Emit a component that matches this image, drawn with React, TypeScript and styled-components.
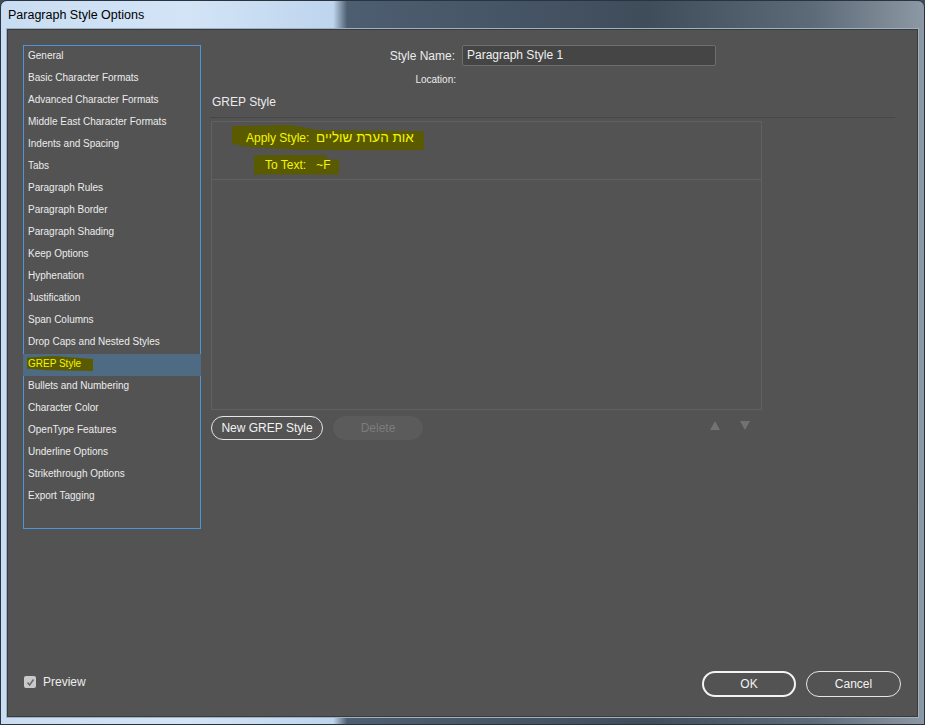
import React from "react";
import styled, { createGlobalStyle } from "styled-components";

const Global = createGlobalStyle`
  html, body { margin: 0; padding: 0; background: #3f4c59; }
  body { font-family: "Liberation Sans", Arial, sans-serif; }
  * { box-sizing: border-box; }
`;

const Window = styled.div`
  width: 925px;
  height: 725px;
  display: flex;
  flex-direction: column;
  padding: 0 6px 7px 6px;
  border-radius: 7px 7px 0 0;
  border: 1px solid #2a3440;
  background: linear-gradient(
    90deg,
    #c9ddf2 0%,
    #d3e4f6 20%,
    #bed5ee 36%,
    #4d5e70 37.5%,
    #465566 55%,
    #3f4c5a 70%,
    #5d6a77 88%,
    #8c99a5 100%
  );
`;

const TitleBar = styled.div`
  height: 28px;
  display: flex;
  align-items: center;
  padding-left: 1px;
  font-family: "Liberation Sans", Arial, sans-serif;
  font-size: 12.5px;
  color: #000;
`;

const Content = styled.div`
  flex: 1;
  background: #535353;
  border: 1px solid #3a3a3a;
  outline: 1px solid #9fb2c4;
  display: flex;
  flex-direction: column;
  padding: 15px 16px 19px 15px;
  color: #e8e8e8;
  font-family: "Liberation Sans", Arial, sans-serif;
`;

const Top = styled.div`
  display: flex;
  gap: 10px;
`;

const SideList = styled.ul`
  list-style: none;
  margin: 0;
  padding: 0;
  width: 178px;
  height: 484px;
  border: 1px solid #4a95de;
  flex-shrink: 0;
`;

const SideItem = styled.li<{ $active?: boolean }>`
  height: 22px;
  line-height: 19px;
  font-size: 10px;
  color: #ececec;
  background: ${(p) => (p.$active ? "#4f6a83" : "transparent")};
  margin: 0 -1px;
  padding-left: 5px;
`;

const Marker = styled.span`
  background: #5a5a00;
  color: #f4f400;
  padding: 2px 12px 2px 1px;
  margin-left: -1px;
  clip-path: polygon(0 10%, 40% 0, 100% 20%, 100% 100%, 30% 95%, 0 85%);
`;

const Main = styled.div`
  flex: 1;
  display: flex;
  flex-direction: column;
`;

const FieldGrid = styled.div`
  display: grid;
  grid-template-columns: 244px 254px;
  column-gap: 7px;
  align-items: center;
`;

const Label = styled.label<{ $small?: boolean }>`
  text-align: right;
  font-size: ${(p) => (p.$small ? "10px" : "12px")};
  color: #ececec;
  ${(p) => (p.$small ? "height: 28px; line-height: 28px; margin-right: -1px;" : "")}
`;

const TextInput = styled.div`
  height: 21px;
  border: 1px solid #6e6e6e;
  border-radius: 2px;
  background: #454545;
  font-size: 12px;
  line-height: 19px;
  padding-left: 4px;
  color: #f0f0f0;
`;

const SectionTitle = styled.div`
  font-size: 12px;
  color: #ececec;
  padding-left: 1px;
  height: 16px;
  line-height: 16px;
`;

const Rule = styled.div`
  height: 1px;
  background: #474747;
  margin: 7px 0 3px -1px;
  width: 685px;
`;

const GrepBox = styled.div`
  width: 551px;
  height: 289px;
  border: 1px solid #616161;
  display: flex;
  flex-direction: column;
`;

const GrepEntry = styled.div`
  border-bottom: 1px solid #616161;
  height: 58px;
  display: flex;
  flex-direction: column;
  padding-top: 3px;
`;

const GrepLine = styled.div<{ $indent: number; $h: number }>`
  padding-left: ${(p) => p.$indent}px;
  font-size: 12px;
  height: ${(p) => p.$h}px;
  display: flex;
  align-items: center;
`;

const Highlight = styled.span<{ $rough?: boolean }>`
  background: #5a5a00;
  color: #f6f600;
  padding: ${(p) => (p.$rough ? "5px 10px 5px 14px" : "3px 9px 3px 11px")};
  white-space: pre;
  clip-path: ${(p) =>
    p.$rough
      ? "polygon(0 5%, 30% 0, 45% 20%, 100% 25%, 100% 100%, 35% 100%, 8% 88%, 0 75%)"
      : "polygon(0 0, 85% 0, 85% 25%, 100% 25%, 100% 100%, 0 100%)"};
`;

const Hebrew = styled.span`
  font-size: 13.5px;
`;

const ButtonRow = styled.div`
  display: flex;
  align-items: center;
  margin-top: 6px;
  width: 551px;
`;

const PillButton = styled.button<{ $disabled?: boolean; $strong?: boolean; $w: number; $h: number }>`
  width: ${(p) => p.$w}px;
  height: ${(p) => p.$h}px;
  border-radius: 13px;
  font-family: "Liberation Sans", Arial, sans-serif;
  font-size: 12px;
  padding: 0;
  cursor: default;
  color: ${(p) => (p.$disabled ? "#7c7c7c" : "#f2f2f2")};
  background: ${(p) => (p.$disabled ? "#5b5b5b" : "transparent")};
  border: ${(p) =>
    p.$disabled ? "1px solid #5b5b5b" : p.$strong ? "2px solid #f4f4f4" : "1.5px solid #e6e6e6"};
`;

const Arrows = styled.div`
  margin-left: auto;
  display: flex;
  gap: 20px;
  padding-right: 12px;
  padding-bottom: 6px;
`;

const Footer = styled.div`
  margin-top: auto;
  display: flex;
  align-items: center;
  padding-left: 1px;
`;

const PreviewBox = styled.div`
  display: flex;
  align-items: center;
  margin-bottom: 4px;
`;

const Check = styled.span`
  width: 12px;
  height: 12px;
  border-radius: 2px;
  background: #c9c9c9;
  display: inline-flex;
  align-items: center;
  justify-content: center;
  margin-right: 7px;
`;

const CheckLabel = styled.span`
  font-size: 12px;
  color: #ececec;
`;

const FooterButtons = styled.div`
  margin-left: auto;
  display: flex;
  gap: 10px;
`;

const items = [
  "General",
  "Basic Character Formats",
  "Advanced Character Formats",
  "Middle East Character Formats",
  "Indents and Spacing",
  "Tabs",
  "Paragraph Rules",
  "Paragraph Border",
  "Paragraph Shading",
  "Keep Options",
  "Hyphenation",
  "Justification",
  "Span Columns",
  "Drop Caps and Nested Styles",
  "GREP Style",
  "Bullets and Numbering",
  "Character Color",
  "OpenType Features",
  "Underline Options",
  "Strikethrough Options",
  "Export Tagging",
];

const Tri = ({ down }: { down?: boolean }) => (
  <svg width="10" height="9" viewBox="0 0 10 9">
    <polygon points={down ? "0,0 10,0 5,9" : "5,0 10,9 0,9"} fill="#727272" />
  </svg>
);

export default function App() {
  return (
    <>
      <Global />
      <Window>
        <TitleBar>Paragraph Style Options</TitleBar>
        <Content>
          <Top>
            <SideList>
              {items.map((it) => (
                <SideItem key={it} $active={it === "GREP Style"}>
                  {it === "GREP Style" ? <Marker>{it}</Marker> : it}
                </SideItem>
              ))}
            </SideList>
            <Main>
              <FieldGrid>
                <Label>Style Name:</Label>
                <TextInput>Paragraph Style 1</TextInput>
                <Label $small>Location:</Label>
                <div />
              </FieldGrid>
              <SectionTitle>GREP Style</SectionTitle>
              <Rule />
              <GrepBox>
                <GrepEntry>
                  <GrepLine $indent={20} $h={25}>
                    <Highlight $rough>
                      {"Apply Style:  "}
                      <Hebrew dir="rtl">אות הערת שוליים</Hebrew>
                    </Highlight>
                  </GrepLine>
                  <GrepLine $indent={42} $h={29}>
                    <Highlight>{"To Text:   ~F"}</Highlight>
                  </GrepLine>
                </GrepEntry>
              </GrepBox>
              <ButtonRow>
                <PillButton $w={112} $h={24}>New GREP Style</PillButton>
                <PillButton $w={90} $h={24} $disabled style={{ marginLeft: 10 }}>
                  Delete
                </PillButton>
                <Arrows>
                  <Tri />
                  <Tri down />
                </Arrows>
              </ButtonRow>
            </Main>
          </Top>
          <Footer>
            <PreviewBox>
              <Check>
                <svg width="9" height="9" viewBox="0 0 9 9">
                  <path d="M1.5 4.5 L3.6 7 L7.5 1.5" stroke="#6a6a6a" strokeWidth="1.5" fill="none" />
                </svg>
              </Check>
              <CheckLabel>Preview</CheckLabel>
            </PreviewBox>
            <FooterButtons>
              <PillButton $w={94} $h={26} $strong>OK</PillButton>
              <PillButton $w={95} $h={26} $strong={false}>Cancel</PillButton>
            </FooterButtons>
          </Footer>
        </Content>
      </Window>
    </>
  );
}
